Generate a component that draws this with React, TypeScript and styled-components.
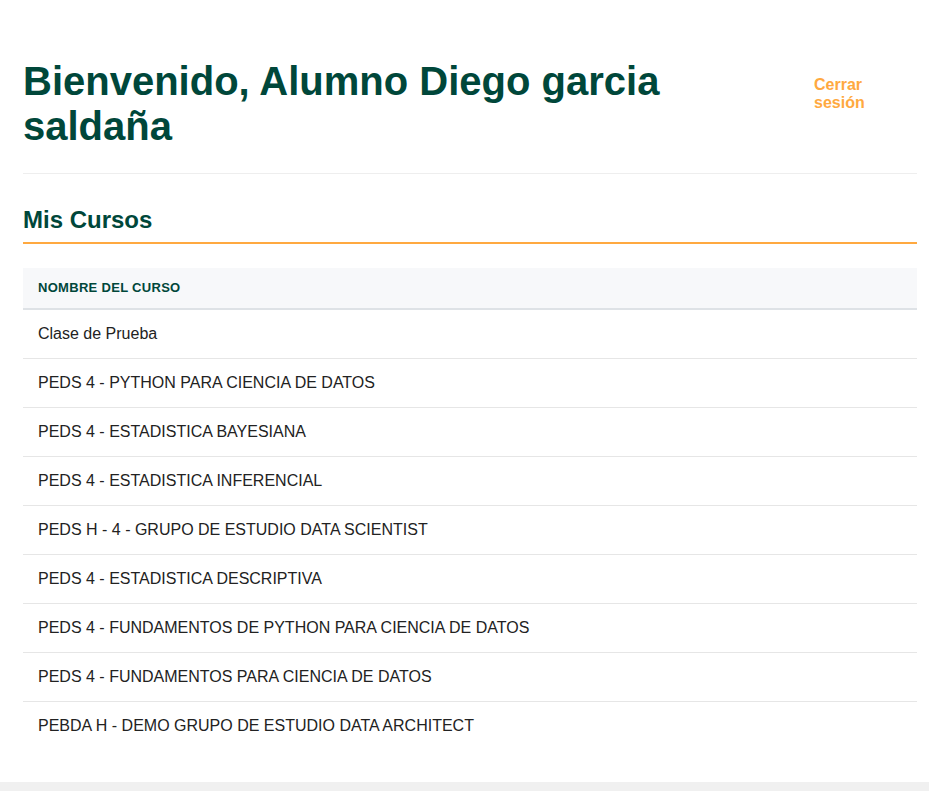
import React from 'react';
import styled, { createGlobalStyle } from 'styled-components';

const GlobalStyle = createGlobalStyle`
  html, body {
    margin: 0;
    padding: 0;
    background-color: #f0f0f0;
    font-family: "Liberation Sans", Arial, sans-serif;
  }
`;

const Card = styled.div`
  background-color: #ffffff;
  padding: 59px 12px 32px 23px;
  box-shadow: 0 2px 8px rgba(0, 0, 0, 0.12);
  min-height: 691px;
`;

const Header = styled.header`
  display: flex;
  justify-content: space-between;
  align-items: flex-start;
  padding-bottom: 24px;
  border-bottom: 1px solid #eeeeee;
`;

const Title = styled.h1`
  margin: 0;
  flex: 1;
  max-width: 700px;
  font-size: 40px;
  line-height: 45px;
  font-weight: 700;
  color: #00473a;
`;

const LogoutButton = styled.button`
  background: none;
  border: none;
  cursor: pointer;
  width: 103px;
  margin: 17px 16px 0 0;
  padding: 0 16px;
  text-align: left;
  font-family: inherit;
  font-size: 16px;
  line-height: 18px;
  font-weight: 700;
  color: #ffa940;
`;

const SectionTitle = styled.h2`
  margin: 33px 0 0;
  padding-bottom: 9px;
  font-size: 24px;
  line-height: 26px;
  font-weight: 700;
  color: #00473a;
  border-bottom: 2px solid #ffa940;
`;

const Table = styled.table`
  width: 100%;
  margin-top: 24px;
  border-collapse: collapse;
`;

const HeadCell = styled.th`
  background-color: #f7f8fa;
  border-bottom: 2px solid #dee2e6;
  padding: 12px 15px;
  height: 40px;
  box-sizing: border-box;
  text-align: left;
  font-size: 13px;
  line-height: 16px;
  font-weight: 700;
  letter-spacing: 0.3px;
  text-transform: uppercase;
  color: #00473a;
`;

const Row = styled.tr`
  & + & td {
    border-top: 1px solid #e6e6e6;
  }
`;

const Cell = styled.td`
  padding: 12px 15px;
  font-size: 16px;
  line-height: 24px;
  color: #222222;
`;

const courses = [
  'Clase de Prueba',
  'PEDS 4 - PYTHON PARA CIENCIA DE DATOS',
  'PEDS 4 - ESTADISTICA BAYESIANA',
  'PEDS 4 - ESTADISTICA INFERENCIAL',
  'PEDS H - 4 - GRUPO DE ESTUDIO DATA SCIENTIST',
  'PEDS 4 - ESTADISTICA DESCRIPTIVA',
  'PEDS 4 - FUNDAMENTOS DE PYTHON PARA CIENCIA DE DATOS',
  'PEDS 4 - FUNDAMENTOS PARA CIENCIA DE DATOS',
  'PEBDA H - DEMO GRUPO DE ESTUDIO DATA ARCHITECT',
];

const App: React.FC = () => {
  return (
    <>
      <GlobalStyle />
      <Card>
        <Header>
          <Title>Bienvenido, Alumno Diego garcia saldaña</Title>
          <LogoutButton>Cerrar sesión</LogoutButton>
        </Header>
        <SectionTitle>Mis Cursos</SectionTitle>
        <Table>
          <thead>
            <tr>
              <HeadCell>Nombre del curso</HeadCell>
            </tr>
          </thead>
          <tbody>
            {courses.map((name) => (
              <Row key={name}>
                <Cell>{name}</Cell>
              </Row>
            ))}
          </tbody>
        </Table>
      </Card>
    </>
  );
};

export default App;
